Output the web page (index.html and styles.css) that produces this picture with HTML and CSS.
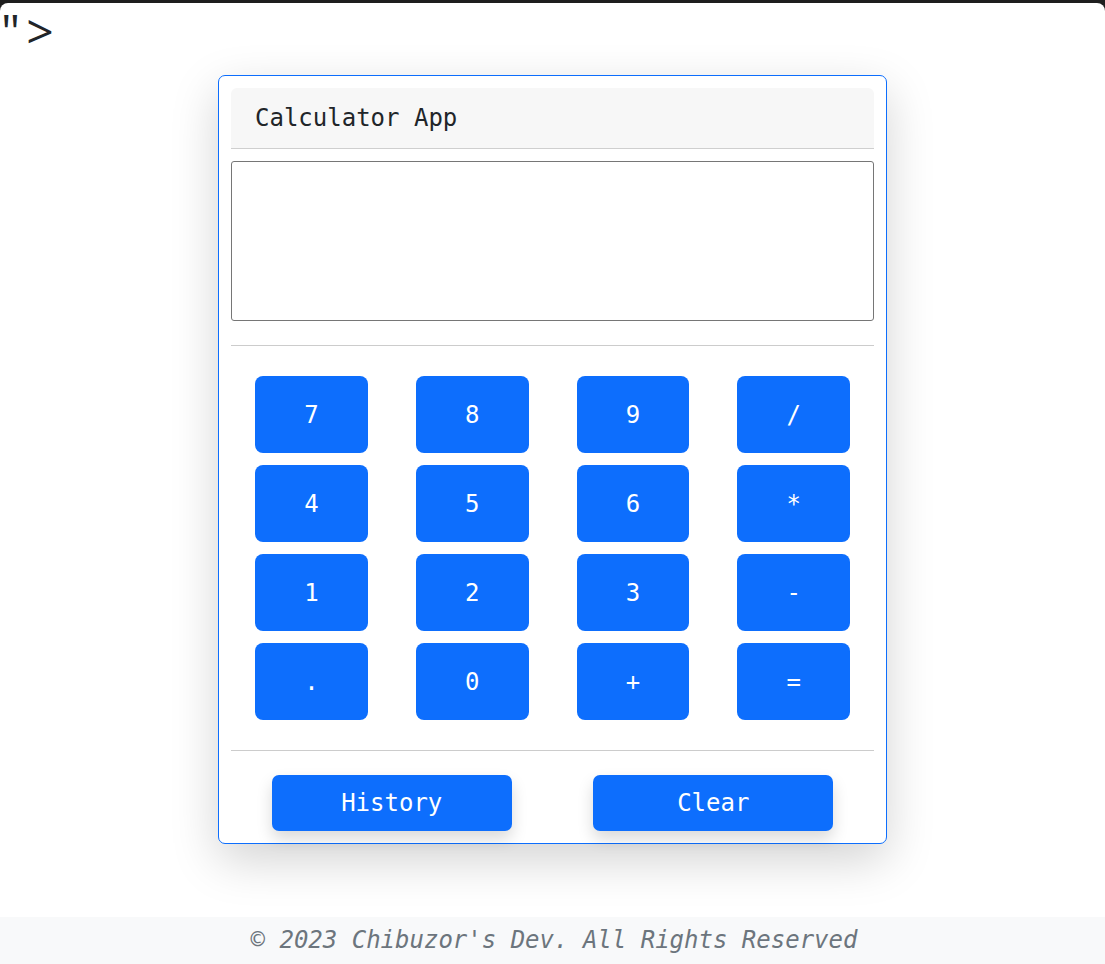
FILE: index.html
```html
<!DOCTYPE html>
<html lang="en">
<head>
<meta charset="utf-8">
<title>Calculator App</title>
<link rel="stylesheet" href="styles.css">
</head>
<body>
<div class="page">
  <div class="stray">"&gt;</div>
  <main class="wrap">
    <section class="card">
      <div class="card-header">Calculator App</div>
      <div class="display"></div>
      <hr class="rule">
      <div class="keys">
        <div class="cell"><button class="key">7</button></div>
        <div class="cell"><button class="key">8</button></div>
        <div class="cell"><button class="key">9</button></div>
        <div class="cell"><button class="key">/</button></div>
        <div class="cell"><button class="key">4</button></div>
        <div class="cell"><button class="key">5</button></div>
        <div class="cell"><button class="key">6</button></div>
        <div class="cell"><button class="key">*</button></div>
        <div class="cell"><button class="key">1</button></div>
        <div class="cell"><button class="key">2</button></div>
        <div class="cell"><button class="key">3</button></div>
        <div class="cell"><button class="key">-</button></div>
        <div class="cell"><button class="key">.</button></div>
        <div class="cell"><button class="key">0</button></div>
        <div class="cell"><button class="key">+</button></div>
        <div class="cell"><button class="key">=</button></div>
      </div>
      <hr class="rule">
      <div class="actions">
        <div class="action-cell"><button class="action">History</button></div>
        <div class="action-cell"><button class="action">Clear</button></div>
      </div>
    </section>
  </main>
  <footer class="footer">© 2023 Chibuzor's Dev. All Rights Reserved</footer>
</div>
</body>
</html>
```

FILE: styles.css
```css
html {
  background: #1e1e1e;
  margin: 0;
  padding: 0;
}
body {
  margin: 3px 0 0 0;
  background: #ffffff;
  border-radius: 8px 8px 0 0;
  min-height: calc(100vh - 3px);
  font-family: "DejaVu Sans Mono", monospace;
  font-size: 24px;
  color: #212529;
}
.page {
  display: flex;
  flex-direction: column;
  min-height: calc(100vh - 3px);
}
.stray {
  font-family: "Open Sans", "Noto Sans", sans-serif;
  font-size: 48px;
  font-weight: 500;
  letter-spacing: 6px;
  line-height: 56px;
  height: 56px;
  padding-left: 1px;
  color: #212529;
}
.wrap {
  display: flex;
  justify-content: center;
  padding-top: 16px;
  padding-bottom: 73px;
  flex: 1;
}
.card {
  width: 643px;
  padding: 12px;
  border: 1px solid #0d6efd;
  border-radius: 7px;
  background: #fff;
  box-shadow: 0 16px 48px rgba(0, 0, 0, 0.175);
}
.card-header {
  background: #f7f7f7;
  border-bottom: 1px solid #cfcfcf;
  border-radius: 6px 6px 0 0;
  padding: 12px 24px;
  line-height: 36px;
  height: 36px;
  color: #212529;
}
.display {
  margin-top: 12px;
  height: 158px;
  border: 1px solid #767676;
  border-radius: 3px;
}
.rule {
  margin: 24px 0 0 0;
  border: 0;
  border-top: 1px solid #cccccc;
  height: 0;
}
.keys {
  display: grid;
  grid-template-columns: repeat(4, 1fr);
  row-gap: 12px;
  padding: 30px 0 30px 0;
}
.keys + .rule {
  margin-top: 0;
}
.cell {
  padding: 0 24px;
}
.key {
  display: block;
  width: 100%;
  height: 77px;
  border: 0;
  border-radius: 8px;
  background: #0d6efd;
  color: #fff;
  font-family: "DejaVu Sans Mono", monospace;
  font-size: 24px;
  line-height: 36px;
  padding: 0;
}
.actions {
  display: grid;
  grid-template-columns: 1fr 1fr;
  padding-top: 24px;
}
.action-cell {
  display: flex;
  justify-content: center;
}
.action {
  width: 240px;
  height: 56px;
  border: 0;
  border-radius: 7px;
  background: #0d6efd;
  color: #fff;
  font-family: "DejaVu Sans Mono", monospace;
  font-size: 24px;
  line-height: 36px;
  padding: 0;
  box-shadow: 0 8px 16px rgba(0, 0, 0, 0.15);
}
.footer {
  background: #f8f9fa;
  color: #6c757d;
  font-style: italic;
  text-align: center;
  height: 47px;
  line-height: 47px;
  padding-left: 3px;
}
```
